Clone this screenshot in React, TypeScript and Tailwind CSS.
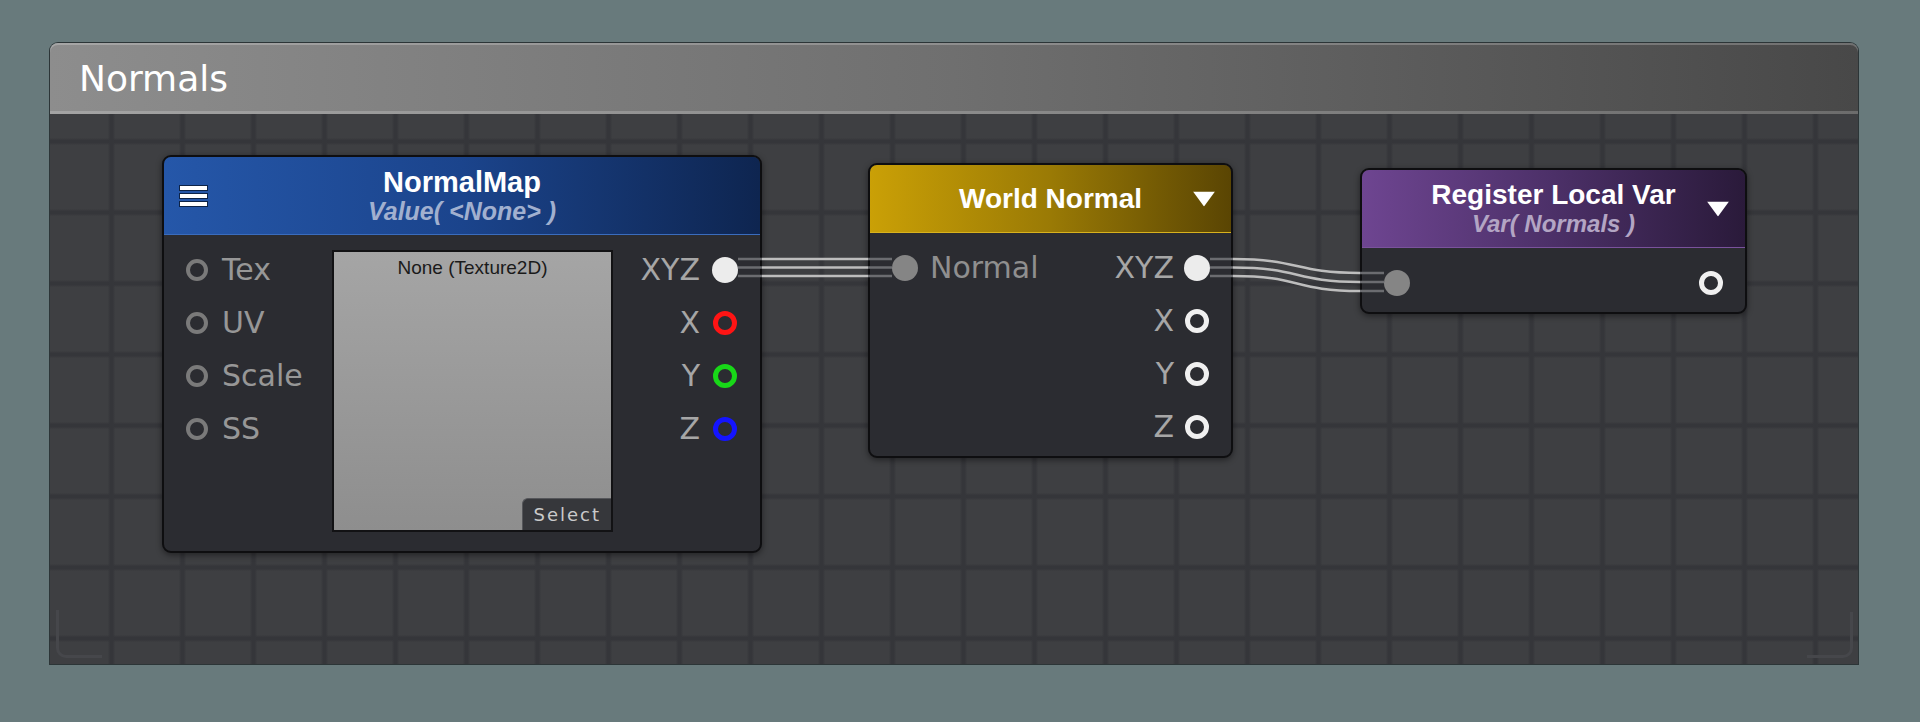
import React from "react";

// one connector slot, the inner span carries the look of the port
function Dot({ className }: { className: string }) {
  return (
    <span className="flex h-[26px] w-[26px] shrink-0 items-center justify-center">
      <span className={`block rounded-full ${className}`} />
    </span>
  );
}

const label = "font-['DejaVu_Sans',sans-serif] text-[30px] leading-none";
const title = "font-['Liberation_Sans',Arial,sans-serif] font-bold text-white";

function Triangle() {
  return (
    <svg width="22" height="15" viewBox="0 0 22 15" className="absolute right-[16px] top-1/2 -translate-y-1/2">
      <polygon points="0,0 22,0 11,15" fill="#ffffff" />
    </svg>
  );
}

function Wires() {
  const faint = "#6b6c70";
  const main = "#bdbdbd";
  const ys1 = [259, 267.5, 276];
  const ys2 = [273, 282, 291];
  return (
    <svg className="pointer-events-none absolute left-0 top-0" width="1920" height="722">
      {ys1.map((y) => (
        <g key={`a${y}`}>
          <line x1="738" y1={y} x2="762" y2={y} stroke={faint} strokeWidth="2.5" />
          <line x1="762" y1={y} x2="868" y2={y} stroke={main} strokeWidth="2.5" />
          <line x1="868" y1={y} x2="892" y2={y} stroke={faint} strokeWidth="2.5" />
        </g>
      ))}
      {ys1.map((y, i) => (
        <g key={`b${y}`}>
          <line x1="1210" y1={y} x2="1233" y2={y} stroke={faint} strokeWidth="2.5" />
          <path
            d={`M1233 ${y} C1300 ${y} 1294 ${ys2[i]} 1360 ${ys2[i]}`}
            fill="none"
            stroke={main}
            strokeWidth="2.5"
          />
          <line x1="1360" y1={ys2[i]} x2="1384" y2={ys2[i]} stroke={faint} strokeWidth="2.5" />
        </g>
      ))}
    </svg>
  );
}

function NormalMapNode() {
  const inputs = ["Tex", "UV", "Scale", "SS"];
  const outputs = [
    { name: "XYZ", dot: "h-[26px] w-[26px] bg-[#ececec]" },
    { name: "X", dot: "h-[24px] w-[24px] border-[5px] border-[#ff1414]" },
    { name: "Y", dot: "h-[24px] w-[24px] border-[5px] border-[#18d818]" },
    { name: "Z", dot: "h-[24px] w-[24px] border-[5px] border-[#1414ff]" },
  ];
  return (
    <div className="absolute left-[112px] top-[41px] flex h-[398px] w-[600px] flex-col overflow-hidden rounded-[9px] border-2 border-[#0e0e10] bg-[#2b2c31] shadow-[0_2px_6px_rgba(0,0,0,0.45)]">
      <div className="relative flex h-[78px] shrink-0 flex-col items-center justify-center border-b border-[#3a6cbd] bg-[linear-gradient(to_right,#2557a9,#1b448c_50%,#0e2550)]">
        <div className="absolute left-[16px] top-1/2 flex -translate-y-1/2 flex-col gap-[4px]">
          <span className="block h-[4px] w-[27px] bg-white shadow-[0_0_0_1px_#0d2347]" />
          <span className="block h-[4px] w-[27px] bg-white shadow-[0_0_0_1px_#0d2347]" />
          <span className="block h-[4px] w-[27px] bg-white shadow-[0_0_0_1px_#0d2347]" />
        </div>
        <div className={`${title} text-[29px] leading-[30px]`}>NormalMap</div>
        <div className="font-['Liberation_Sans',Arial,sans-serif] text-[25px] font-bold italic leading-[28px] text-[#a1b0cf]">
          Value( &lt;None&gt; )
        </div>
      </div>
      <div className="flex flex-1 pt-[8px]">
        <div className="flex w-[168px] shrink-0 flex-col pl-[20px]">
          {inputs.map((n) => (
            <div key={n} className="flex h-[53px] items-center gap-[12px]">
              <Dot className="h-[22px] w-[22px] border-4 border-[#7a7a7a]" />
              <span className={`${label} text-[#979797]`}>{n}</span>
            </div>
          ))}
        </div>
        <div className="mt-[7px] flex h-[282px] w-[281px] shrink-0 flex-col items-center justify-between border-2 border-[#121214] bg-[linear-gradient(to_bottom,#a5a5a5,#8e8e8e)]">
          <span className="pt-[5px] font-['Liberation_Sans',Arial,sans-serif] text-[19px] leading-[22px] text-[#1a1a1a]">
            None (Texture2D)
          </span>
          <span className="self-end rounded-tl-[6px] border-l border-t border-[#55565a] bg-[#36373b] px-[10px] pb-[3px] pt-[4px] font-['DejaVu_Sans',sans-serif] text-[18px] leading-[24px] tracking-[2px] text-[#cacaca]">
            Select
          </span>
        </div>
        <div className="flex flex-1 flex-col items-end pr-[22px]">
          {outputs.map((o) => (
            <div key={o.name} className="flex h-[53px] items-center gap-[12px]">
              <span className={`${label} text-[#a6a6a6]`}>{o.name}</span>
              <Dot className={o.dot} />
            </div>
          ))}
        </div>
      </div>
    </div>
  );
}

function WorldNormalNode() {
  const ring = "h-[24px] w-[24px] border-[5px] border-[#f0f0f0]";
  return (
    <div className="absolute left-[818px] top-[49px] flex h-[295px] w-[365px] flex-col overflow-hidden rounded-[9px] border-2 border-[#0e0e10] bg-[#2b2c31] shadow-[0_2px_6px_rgba(0,0,0,0.45)]">
      <div className="relative flex h-[68px] shrink-0 items-center justify-center border-b border-[#d8b21e] bg-[linear-gradient(to_right,#caa006,#9a7a05_50%,#5a4503)]">
        <span className={`${title} text-[28px] leading-none`}>World Normal</span>
        <Triangle />
      </div>
      <div className="flex flex-col pl-[22px] pr-[21px] pt-[8px]">
        <div className="flex h-[53px] items-center justify-between">
          <div className="flex items-center gap-[12px]">
            <Dot className="h-[26px] w-[26px] bg-[#858585]" />
            <span className={`${label} text-[#8f8f8f]`}>Normal</span>
          </div>
          <div className="flex items-center gap-[10px]">
            <span className={`${label} text-[#a6a6a6]`}>XYZ</span>
            <Dot className="h-[26px] w-[26px] bg-[#ececec]" />
          </div>
        </div>
        {["X", "Y", "Z"].map((n) => (
          <div key={n} className="flex h-[53px] items-center justify-end gap-[10px]">
            <span className={`${label} text-[#a6a6a6]`}>{n}</span>
            <Dot className={ring} />
          </div>
        ))}
      </div>
    </div>
  );
}

function RegisterNode() {
  return (
    <div className="absolute left-[1310px] top-[54px] flex h-[146px] w-[387px] flex-col overflow-hidden rounded-[9px] border-2 border-[#0e0e10] bg-[#2b2c31] shadow-[0_2px_6px_rgba(0,0,0,0.45)]">
      <div className="relative flex h-[78px] shrink-0 flex-col items-center justify-center border-b border-[#7a529c] bg-[linear-gradient(to_right,#6e4591,#4c3068_50%,#2a1a3a)]">
        <div className={`${title} text-[28px] leading-[30px]`}>Register Local Var</div>
        <div className="font-['Liberation_Sans',Arial,sans-serif] text-[24px] font-bold italic leading-[28px] text-[#b3a5c4]">
          Var( Normals )
        </div>
        <Triangle />
      </div>
      <div className="mt-[8px] flex h-[53px] items-center justify-between pl-[22px] pr-[21px]">
        <Dot className="h-[26px] w-[26px] bg-[#858585]" />
        <Dot className="h-[24px] w-[24px] border-[5px] border-[#f0f0f0]" />
      </div>
    </div>
  );
}

export default function App() {
  return (
    <div className="relative h-[722px] w-[1920px] overflow-hidden bg-[#687a7c] pl-[50px] pt-[43px]">
      <div className="flex h-[621px] w-[1808px] flex-col rounded-t-[8px] shadow-[0_0_0_1px_#2c3537]">
        <div className="flex h-[71px] shrink-0 items-center rounded-t-[8px] bg-[linear-gradient(to_right,#8d8d8d,#6f6f6f_50%,#484848)] pl-[29px] shadow-[inset_0_2px_0_rgba(255,255,255,0.22),inset_0_-3px_0_rgba(255,255,255,0.2)]">
          <span className="font-['DejaVu_Sans',sans-serif] text-[36px] leading-none text-white">Normals</span>
        </div>
        <div className="relative flex-1 bg-[#3e3f42] bg-[linear-gradient(to_right,transparent_58px,#35363a_60px,#35363a_63px,transparent_65px),linear-gradient(to_bottom,transparent_24px,#35363a_26px,#35363a_29px,transparent_31px)] bg-[size:71px_71px]">
          <div className="absolute bottom-[6px] left-[6px] h-[48px] w-[46px] rounded-bl-[10px] border-b-[3px] border-l-[3px] border-[#46474b]" />
          <div className="absolute bottom-[6px] right-[5px] h-[46px] w-[46px] rounded-br-[10px] border-b-[3px] border-r-[3px] border-[#46474b]" />
          <NormalMapNode />
          <WorldNormalNode />
          <RegisterNode />
        </div>
      </div>
      <Wires />
    </div>
  );
}
